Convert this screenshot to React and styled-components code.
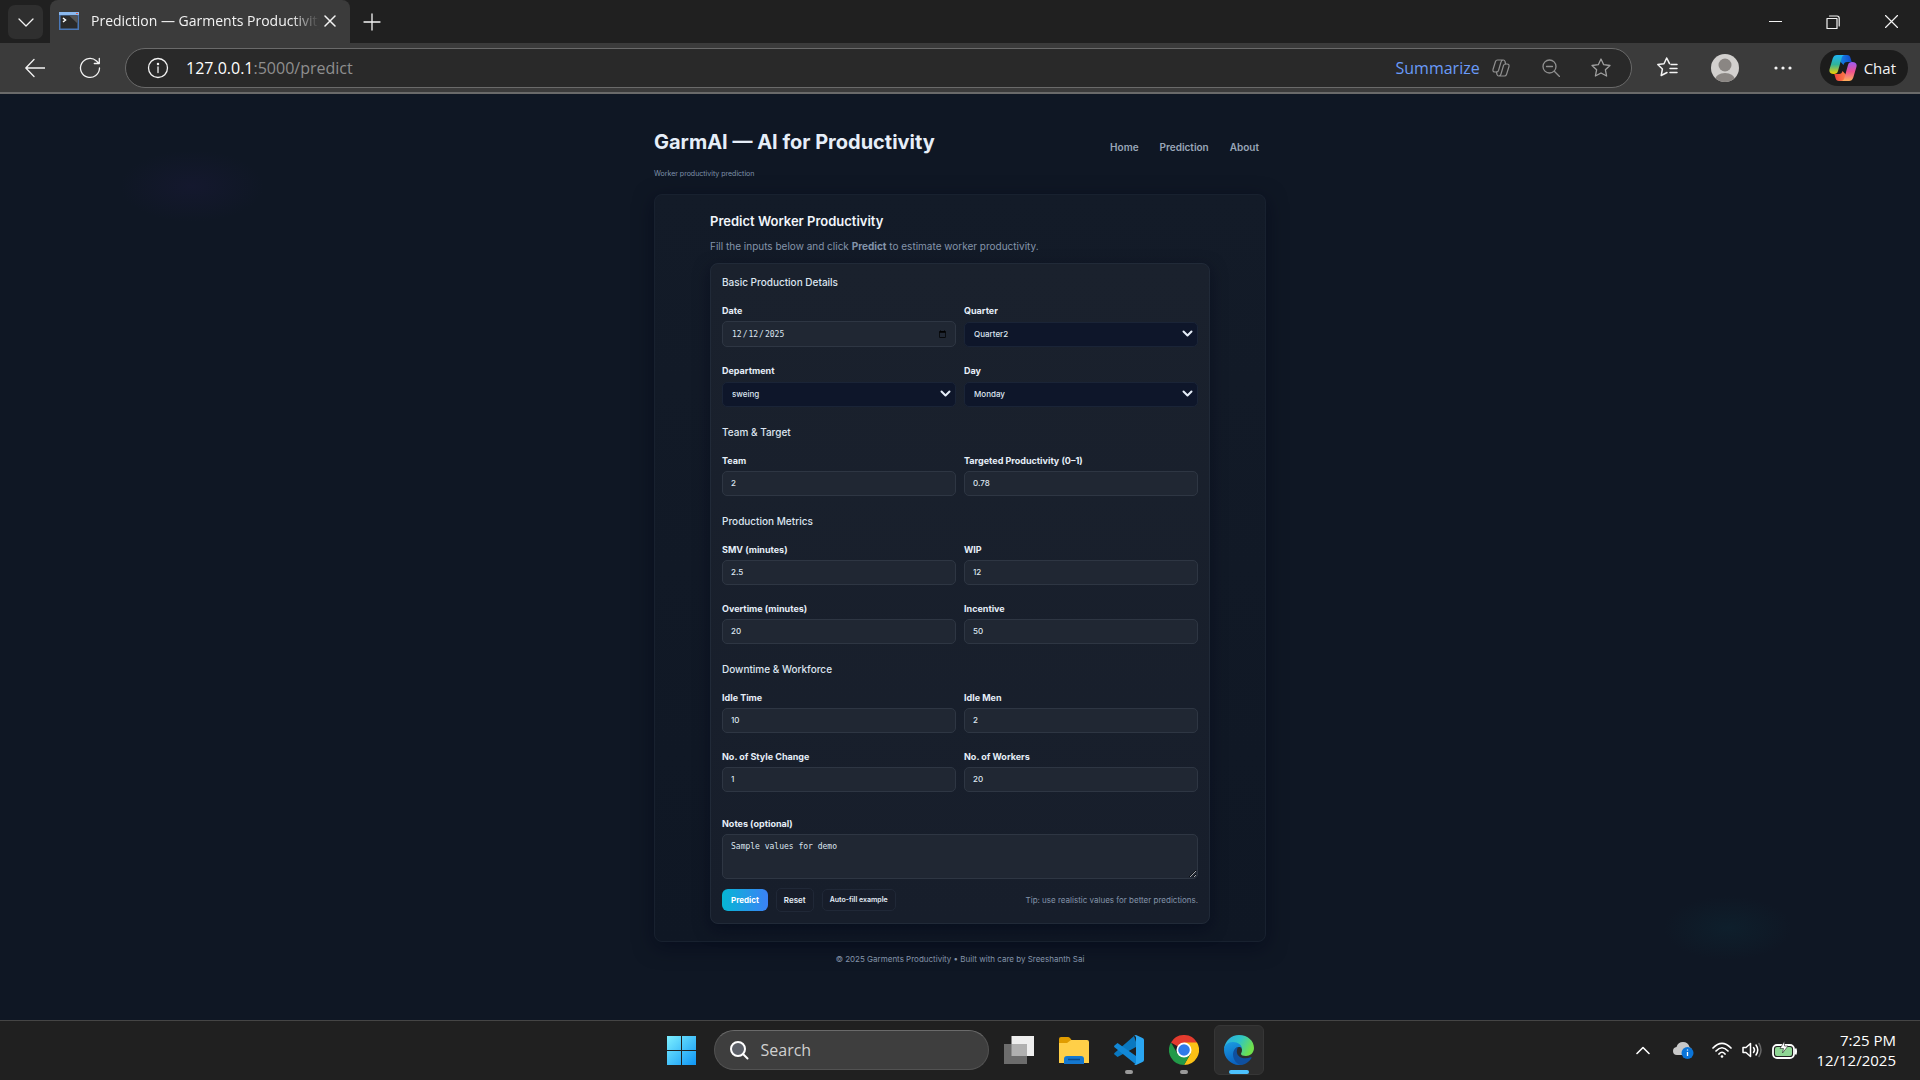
import styled, { createGlobalStyle } from "styled-components";

const ui = `"Open Sans", "Noto Sans", sans-serif`;
const mono = `"DejaVu Sans Mono", monospace`;

const GlobalStyle = createGlobalStyle`
   * {
      box-sizing: border-box;
   }
   body {
      margin: 0;
      background: #0f1724;
      font-family: Inter, sans-serif;
   }
   button, input, select, textarea {
      font-family: inherit;
      margin: 0;
   }
`

const Screen = styled.div`
   display: flex;
   flex-direction: column;
   min-height: 100vh;
`

/* browser */

const TabStrip = styled.div`
   display: flex;
   align-items: center;
   height: 43px;
   padding-left: 8px;
   background: #202020;
   color: #f3f3f3;
   font-family: ${ui};
`

const IconButton = styled.button`
   display: flex;
   align-items: center;
   justify-content: center;
   flex: none;
   width: ${(p) => p.$w || 36}px;
   height: ${(p) => p.$h || 34}px;
   padding: 0;
   border: none;
   border-radius: 7px;
   background: ${(p) => p.$bg || "transparent"};
   color: ${(p) => p.$color || "#f3f3f3"};
`

const Tab = styled.div`
   display: flex;
   align-items: center;
   width: 300px;
   height: 43px;
   margin-left: 7px;
   padding: 0 9px 2px;
   border-radius: 8px 8px 0 0;
   background: #3b3b3b;
`

const TabTitle = styled.span`
   flex: 1;
   margin-left: 12px;
   overflow: hidden;
   white-space: nowrap;
   font-size: 14px;
   line-height: 20px;
   mask-image: linear-gradient(90deg, #000 88%, transparent);
`

const Spacer = styled.div`
   flex: 1;
`

const Toolbar = styled.div`
   display: flex;
   align-items: center;
   height: 51px;
   padding: 0 12px 0 15px;
   background: #3b3b3b;
   border-bottom: 2px solid #6a6a6a;
   color: #f3f3f3;
   font-family: ${ui};
`

const AddressBar = styled.div`
   display: flex;
   flex: 1;
   align-items: center;
   height: 40px;
   padding: 0 5px 0 14px;
   border: 1px solid #6a6a6a;
   border-radius: 20px;
   background: #292929;
`

const Url = styled.span`
   flex: 1;
   margin-left: 10px;
   color: #8f8f8f;
   font-size: 16px;
   line-height: 24px;
   b {
      color: #ffffff;
      font-weight: 400;
   }
`

const Summarize = styled.button`
   display: flex;
   align-items: center;
   gap: 12px;
   padding: 0;
   margin-right: 16px;
   border: none;
   background: none;
   color: #6a9bf8;
   font-size: 16px;
`

const ChatButton = styled.button`
   display: flex;
   align-items: center;
   gap: 7px;
   height: 36px;
   padding: 0 12px 0 9px;
   border: none;
   border-radius: 18px;
   background: #1c1c1c;
   color: #f3f3f3;
   font-size: 15px;
`

/* page */

const Page = styled.main`
   display: flex;
   flex: 1;
   flex-direction: column;
   align-items: center;
   padding-top: 32px;
   background:
      radial-gradient(ellipse 72px 36px at 192px 92px, #14182e, rgba(20, 24, 46, 0)),
      radial-gradient(ellipse 64px 32px at calc(100% - 192px) calc(100% - 92px), #0e1f2c, rgba(14, 31, 44, 0)),
      #0f1724;
`

const Container = styled.div`
   width: 100%;
   max-width: 612px;
`

const PageHeader = styled.header`
   display: flex;
   align-items: center;
   justify-content: space-between;
   height: 42px;
`

const Brand = styled.h1`
   margin: 0 0 11px;
   color: #e6eef8;
   font-size: 20px;
   font-weight: 700;
   line-height: 30px;
`

const Nav = styled.nav`
   display: flex;
   gap: 21px;
   padding-right: 7px;
   a {
      color: #9aa6b8;
      font-size: 10px;
      font-weight: 600;
      line-height: 16px;
      text-decoration: none;
   }
`

const Tagline = styled.p`
   margin: 0 0 14px;
   color: #7f92ab;
   font-size: 7px;
   line-height: 12px;
`

const Card = styled.section`
   padding: 17px 55px;
   border: 1px solid #18212f;
   border-radius: 8px;
   background: linear-gradient(180deg, #131b28, #0f1724);
   box-shadow: 0 5px 20px rgba(2, 6, 23, 0.5);
`

const Title = styled.h2`
   margin: 0;
   color: #f1f5fb;
   font-size: 13px;
   font-weight: 600;
   line-height: 18px;
`

const Intro = styled.p`
   margin: 8px 0 9px;
   color: #8494aa;
   font-size: 10px;
   line-height: 16px;
`

const Form = styled.form`
   padding: 11px;
   border: 1px solid #212a38;
   border-radius: 8px;
   background: linear-gradient(180deg, #1a212d, #171e2b);
   box-shadow: 0 5px 16px rgba(2, 6, 23, 0.5);
`

const Group = styled.fieldset`
   min-width: 0;
   margin: 0 0 18px;
   padding: 0;
   border: none;
   &:last-of-type {
      margin-bottom: 25px;
   }
`

const Legend = styled.legend`
   padding: 0;
   margin-bottom: 15px;
   color: #dde5f0;
   font-size: 10px;
   font-weight: 500;
   line-height: 14px;
`

const Grid = styled.div`
   display: grid;
   grid-template-columns: 1fr 1fr;
   gap: 17px 8px;
`

const FieldBox = styled.div`
   display: flex;
   flex-direction: column;
   gap: 3px;
   label {
      color: #e6eef8;
      font-size: 9px;
      font-weight: 700;
      line-height: 14px;
   }
`

const Control = styled.input`
   width: 100%;
   height: ${(p) => (p.type === "date" ? 26 : 25)}px;
   padding: 0 8px;
   border: 1px solid #2e3643;
   border-radius: 5px;
   outline: none;
   background: #202733;
   color: #dde5f0;
   font-family: ${(p) => (p.type === "date" ? mono : "inherit")};
   font-size: 8px;
   font-weight: 500;
   &::-webkit-calendar-picker-indicator {
      width: 9px;
      height: 9px;
      padding: 0;
   }
`

const SelectWrap = styled.div`
   position: relative;
   color: #e6eef8;
   svg {
      position: absolute;
      top: 7px;
      right: 5px;
      pointer-events: none;
   }
`

const Select = styled.select`
   width: 100%;
   height: 25px;
   padding: 0 9px;
   border: 1px solid #1a2437;
   border-radius: 5px;
   appearance: none;
   background: #0e162a;
   color: #dde5f0;
   font-size: 8px;
   font-weight: 500;
`

const Notes = styled.textarea`
   display: block;
   width: 100%;
   height: 45px;
   padding: 7px 8px;
   border: 1px solid #2e3643;
   border-radius: 5px;
   outline: none;
   background: #202733;
   color: #dde5f0;
   font-family: ${mono} !important;
   font-size: 8px;
   line-height: 10px;
`

const Actions = styled.div`
   display: flex;
   align-items: center;
   gap: 8px;
   margin-top: 9px;
`

const Button = styled.button`
   height: ${(p) => p.$h || 22}px;
   padding: 0 ${(p) => p.$pad || 7}px;
   border: 1px solid #202837;
   border-radius: 5px;
   background: #171d2a;
   color: #e6eef8;
   font-size: ${(p) => p.$size || 8}px;
   font-weight: 600;
`

const PrimaryButton = styled(Button)`
   border: none;
   border-radius: 6px;
   background: linear-gradient(90deg, #06b6d4, #3b82f6);
   color: #ffffff;
   font-weight: 700;
`

const Tip = styled.span`
   margin-left: auto;
   color: #8494aa;
   font-size: 8px;
   line-height: 12px;
`

const Footer = styled.footer`
   padding: 11px 0;
   color: #8494aa;
   font-size: 8px;
   line-height: 12px;
   text-align: center;
`

/* taskbar */

const Taskbar = styled.footer`
   display: grid;
   grid-template-columns: 1fr auto 1fr;
   align-items: center;
   height: 60px;
   padding-bottom: 1px;
   border-top: 1px solid #454545;
   background: #202020;
   color: #ffffff;
   font-family: ${ui};
`

const Apps = styled.div`
   display: flex;
   grid-column: 2;
   align-items: center;
   gap: 5px;
`

const AppButton = styled.button`
   position: relative;
   display: flex;
   align-items: center;
   justify-content: center;
   width: 50px;
   height: 50px;
   padding: 0;
   border: 1px solid ${(p) => (p.$active ? "#363636" : "transparent")};
   border-radius: 6px;
   background: ${(p) => (p.$active ? "#2d2d2d" : "transparent")};
   &::after {
      content: "";
      display: ${(p) => (p.$open || p.$active ? "block" : "none")};
      position: absolute;
      bottom: 0;
      width: ${(p) => (p.$active ? 20 : 8)}px;
      height: 4px;
      border-radius: 2px;
      background: ${(p) => (p.$active ? "#4cc2ff" : "#9a9a9a")};
   }
`

const SearchBox = styled.label`
   display: flex;
   align-items: center;
   gap: 12px;
   width: 275px;
   height: 40px;
   margin-left: 2px;
   padding-left: 14px;
   border: 1px solid #525252;
   border-top-color: #6a6a6a;
   border-radius: 20px;
   background: #3e3e3e;
   input {
      width: 200px;
      padding: 0;
      border: none;
      outline: none;
      background: transparent;
      font-size: 16px;
   }
   input::placeholder {
      color: #d0d0d0;
      opacity: 1;
   }
`

const Tray = styled.div`
   display: flex;
   align-items: center;
   justify-content: flex-end;
   padding-right: 24px;
`

const TrayIcons = styled.div`
   display: flex;
   align-items: center;
   gap: 10px;
   margin-right: 19px;
   svg:first-child {
      margin-right: 13px;
   }
   svg:nth-child(2) {
      margin-right: 8px;
   }
`

const Clock = styled.time`
   font-size: 15px;
   line-height: 20px;
   text-align: right;
   span {
      display: block;
   }
`

function Icon({ size = 20, box, width = 1.3, children }) {
   return (
      <svg width={size} height={size} viewBox={`0 0 ${box || size} ${box || size}`} fill="none" stroke="currentColor" strokeWidth={width} strokeLinecap="round" strokeLinejoin="round" aria-hidden="true">
         {children}
      </svg>
   );
}

function CopilotLogo() {
   return (
      <svg width="28" height="28" viewBox="0 0 28 28" aria-hidden="true">
         <defs>
            <linearGradient id="cpA" x1="0" y1="0" x2="0" y2="1">
               <stop offset="0" stopColor="#1fb4f5" />
               <stop offset="0.5" stopColor="#2fb49a" />
               <stop offset="1" stopColor="#f6d000" />
            </linearGradient>
            <linearGradient id="cpB" x1="0" y1="0" x2="0" y2="1">
               <stop offset="0" stopColor="#9b5cf6" />
               <stop offset="0.5" stopColor="#ee5091" />
               <stop offset="1" stopColor="#ffb05a" />
            </linearGradient>
            <linearGradient id="cpC" x1="0" y1="0" x2="1" y2="0">
               <stop offset="0" stopColor="#1795ee" />
               <stop offset="1" stopColor="#1246c8" />
            </linearGradient>
            <linearGradient id="cpD" x1="0" y1="0" x2="1" y2="0">
               <stop offset="0" stopColor="#f0403c" />
               <stop offset="1" stopColor="#ff8f4a" />
            </linearGradient>
         </defs>
         <path d="M8 1h10c2 0 3 1 3.500 3l1.200 4H18c-2 0-3 1-3.500 3L9 5z" fill="url(#cpC)" />
         <path d="M20 27H10c-2 0-3-1-3.500-3l-1.200-4H10c2 0 3-1 3.500-3l5.500 6z" fill="url(#cpD)" />
         <path d="M8 1h8c-2 0-3 1.500-3.500 3.500L9 17c-.6 2.200-2 3-4 3-4 0-5.200-2-4.400-5L3.700 4.500C4.500 2 6 1 8 1z" fill="url(#cpA)" />
         <path d="M20 27h-8c2 0 3-1.500 3.500-3.500L19 11c.6-2.200 2-3 4-3 4 0 5.200 2 4.400 5l-3.100 10.500C23.500 26 22 27 20 27z" fill="url(#cpB)" />
      </svg>
   );
}

function EdgeLogo() {
   return (
      <svg width="30" height="30" viewBox="0 0 30 30" aria-hidden="true">
         <defs>
            <linearGradient id="edA" x1="0" y1="0" x2="1" y2="0.400">
               <stop offset="0" stopColor="#2aa8e8" />
               <stop offset="0.55" stopColor="#2fc6c4" />
               <stop offset="1" stopColor="#6fe04c" />
            </linearGradient>
            <linearGradient id="edB" x1="0" y1="0" x2="0.300" y2="1">
               <stop offset="0" stopColor="#1b9de2" />
               <stop offset="1" stopColor="#0a62c0" />
            </linearGradient>
         </defs>
         <path d="M0 14C1 6 7 0 15 0c9 0 15 6 15 13 0 5-4 8-8 8-3 0-5-1-5-2 0-1 1-1.500 1-4 0-4-4-7-9-7-4 0-7 2-9 6z" fill="url(#edA)" />
         <path d="M0 15c0-5 4-8 9-8 5 0 9 3 9 7-1-2-2-2-3-2-3 0-5 3-5 6 0 6 5 10 10 10-1 1-3 2-5 2C7 30 0 23 0 15z" fill="url(#edB)" />
         <path d="M14 12c-3 1-5 4-5 7 0 6 4 11 9 11 4-1 8-4 9.500-7 .4-.8-.3-1-1-.700-6 2.500-12.500.200-13.500-4.300-.5-2 .2-4 1-6z" fill="#0f4f9e" />
      </svg>
   );
}

function Field({ label, type = "text", value }) {
   const id = label.replace(/\W+/g, "-").toLowerCase();
   return (
      <FieldBox>
         <label htmlFor={id}>{label}</label>
         <Control id={id} type={type} defaultValue={value} />
      </FieldBox>
   );
}

function SelectField({ label, value }) {
   const id = label.toLowerCase();
   return (
      <FieldBox>
         <label htmlFor={id}>{label}</label>
         <SelectWrap>
            <Select id={id} defaultValue={value}>
               <option>{value}</option>
            </Select>
            <Icon size={11} width={2}><path d="M1.500 3.500 5.500 7.500 9.500 3.500" /></Icon>
         </SelectWrap>
      </FieldBox>
   );
}

function Browser() {
   return (
      <header>
         <TabStrip>
            <IconButton $w={35} $bg="#2f2f2f" aria-label="Tab actions">
               <Icon size={18}><path d="M2 6l7 7 7-7" /></Icon>
            </IconButton>
            <Tab>
               <svg width="20" height="18" viewBox="0 0 20 18" aria-hidden="true">
                  <path d="M0 0h20v18H0z" fill="#4a78b8" />
                  <path d="M0 0h20v3H0z" fill="#8ab8ee" />
                  <path d="M17 1h2v1h-2z" fill="#e05a4a" />
                  <path d="M1.500 3.500h17v13h-17z" fill="#2a2a2a" />
                  <path d="M10 3.500h8.500v8z" fill="#555" />
                  <path d="M4 6l2.500 2L4 10" stroke="#fff" strokeWidth="1.500" fill="none" />
               </svg>
               <TabTitle>Prediction — Garments Productivity</TabTitle>
               <IconButton $w={22} $h={22} aria-label="Close tab">
                  <Icon size={12} width={1.5}><path d="M1 1l10 10M11 1L1 11" /></Icon>
               </IconButton>
            </Tab>
            <IconButton $w={44} aria-label="New tab">
               <Icon size={18}><path d="M9 1v16M1 9h16" /></Icon>
            </IconButton>
            <Spacer />
            <IconButton $w={58} aria-label="Minimize">
               <Icon size={13} width={1}><path d="M0 6.500h13" /></Icon>
            </IconButton>
            <IconButton $w={58} aria-label="Restore">
               <Icon size={14} width={1.2}>
                  <path d="M1 3.500h10v10H1zM3.500 1h7.500q2.200 0 2.200 2.200V11" />
               </Icon>
            </IconButton>
            <IconButton $w={58} aria-label="Close">
               <Icon size={13} width={1.2}><path d="M.5.500l12 12M12.500.500l-12 12" /></Icon>
            </IconButton>
         </TabStrip>
         <Toolbar>
            <IconButton $w={40} aria-label="Back">
               <Icon size={20}><path d="M20 10H1M9 1.500L.8 10 9 18.500" /></Icon>
            </IconButton>
            <IconButton $w={70} $h={40} aria-label="Refresh">
               <Icon size={22}><path d="M20.500 11a9.500 9.500 0 1 1-3-7l2.500 2.500M20.300 1.500v5h-5" /></Icon>
            </IconButton>
            <AddressBar>
               <Icon size={36} width={1.3}>
                  <circle cx="18" cy="18" r="9.500" />
                  <path d="M18 17v5.500" />
                  <circle cx="18" cy="14" r=".6" fill="currentColor" />
               </Icon>
               <Url><b>127.0.0.1</b>:5000/predict</Url>
               <Summarize>
                  Summarize
                  <Icon size={18} width={1.2}>
                     <g stroke="#8f8f8f">
                        <path d="M5.500 1h5.800q1.400 0 1.700 1.500l.6 2.500M5.500 1Q4 1 3.500 2.500L1 10.500Q.5 13 3 13h1.500q1.500 0 2-1.500L9 3q.5-2 2.300-2" />
                        <path d="M12.500 17H6.700q-1.400 0-1.700-1.500L4.400 13M12.500 17q1.500 0 2-1.500L17 7.500Q17.500 5 15 5h-1.500q-1.500 0-2 1.500L9 15q-.5 2-2.300 2" />
                     </g>
                  </Icon>
               </Summarize>
               <IconButton $w={50} $color="#8f8f8f" aria-label="Zoom out">
                  <Icon size={18}><circle cx="7.500" cy="7.500" r="6.500" /><path d="M4.500 7.500h6M12.300 12.300L17.500 17.500" /></Icon>
               </IconButton>
               <IconButton $w={50} $color="#a0a0a0" aria-label="Favorite">
                  <Icon size={20}><path d="M10 1l2.700 5.700 6.300.8-4.600 4.300 1.200 6.200L10 15l-5.600 3 1.200-6.200L1 7.500l6.300-.8z" /></Icon>
               </IconButton>
            </AddressBar>
            <IconButton $w={72} aria-label="Favorites">
               <Icon size={21} width={1.5}><path d="M12.500 6.700h0L9.700 1 7 6.700l-6.200.8L5.400 12 4.200 18.500 10 15.500M14 7.500h6M13 11.500h7M13 15.500h7" /></Icon>
            </IconButton>
            <IconButton $w={42} aria-label="Profile">
               <svg width="28" height="28" viewBox="0 0 28 28">
                  <clipPath id="face"><circle cx="14" cy="14" r="14" /></clipPath>
                  <g clipPath="url(#face)">
                     <path d="M0 0h28v28H0z" fill="#d2d0ce" />
                     <circle cx="14" cy="11" r="6.500" fill="#8a8683" />
                     <ellipse cx="14" cy="26" rx="10" ry="7" fill="#8a8683" />
                  </g>
               </svg>
            </IconButton>
            <IconButton $w={74} aria-label="Settings and more">
               <svg width="18" height="4" viewBox="0 0 18 4" fill="currentColor">
                  <circle cx="2" cy="2" r="1.600" /><circle cx="9" cy="2" r="1.600" /><circle cx="16" cy="2" r="1.600" />
               </svg>
            </IconButton>
            <ChatButton><CopilotLogo />Chat</ChatButton>
         </Toolbar>
      </header>
   );
}

function Predict() {
   return (
      <Page>
         <Container>
            <PageHeader>
               <Brand>GarmAI — AI for Productivity</Brand>
               <Nav>
                  <a href="#home">Home</a>
                  <a href="#predict">Prediction</a>
                  <a href="#about">About</a>
               </Nav>
            </PageHeader>
            <Tagline>Worker productivity prediction</Tagline>
            <Card>
               <Title>Predict Worker Productivity</Title>
               <Intro>Fill the inputs below and click <b>Predict</b> to estimate worker productivity.</Intro>
               <Form onSubmit={(e) => e.preventDefault()}>
                  <Group>
                     <Legend>Basic Production Details</Legend>
                     <Grid>
                        <Field label="Date" type="date" value="2025-12-12" />
                        <SelectField label="Quarter" value="Quarter2" />
                        <SelectField label="Department" value="sweing" />
                        <SelectField label="Day" value="Monday" />
                     </Grid>
                  </Group>
                  <Group>
                     <Legend>Team &amp; Target</Legend>
                     <Grid>
                        <Field label="Team" value="2" />
                        <Field label="Targeted Productivity (0–1)" value="0.78" />
                     </Grid>
                  </Group>
                  <Group>
                     <Legend>Production Metrics</Legend>
                     <Grid>
                        <Field label="SMV (minutes)" value="2.5" />
                        <Field label="WIP" value="12" />
                        <Field label="Overtime (minutes)" value="20" />
                        <Field label="Incentive" value="50" />
                     </Grid>
                  </Group>
                  <Group>
                     <Legend>Downtime &amp; Workforce</Legend>
                     <Grid>
                        <Field label="Idle Time" value="10" />
                        <Field label="Idle Men" value="2" />
                        <Field label="No. of Style Change" value="1" />
                        <Field label="No. of Workers" value="20" />
                     </Grid>
                  </Group>
                  <FieldBox>
                     <label htmlFor="notes">Notes (optional)</label>
                     <Notes id="notes" defaultValue="Sample values for demo" />
                  </FieldBox>
                  <Actions>
                     <PrimaryButton type="submit" $pad={9}>Predict</PrimaryButton>
                     <Button type="reset" $h={24}>Reset</Button>
                     <Button type="button" $size={7}>Auto-fill example</Button>
                     <Tip>Tip: use realistic values for better predictions.</Tip>
                  </Actions>
               </Form>
            </Card>
            <Footer>© 2025 Garments Productivity • Built with care by Sreeshanth Sai</Footer>
         </Container>
      </Page>
   );
}

function WindowsTaskbar() {
   return (
      <Taskbar>
         <Apps>
            <AppButton aria-label="Start">
               <svg width="29" height="29" viewBox="0 0 29 29">
                  <defs>
                     <linearGradient id="win" gradientUnits="userSpaceOnUse" x1="0" y1="0" x2="29" y2="29">
                        <stop offset="0" stopColor="#7df0ff" />
                        <stop offset="1" stopColor="#0e95f5" />
                     </linearGradient>
                  </defs>
                  <path d="M0 0h14v14H0zM15 0h14v14H15zM0 15h14v14H0zM15 15h14v14H15z" fill="url(#win)" />
               </svg>
            </AppButton>
            <SearchBox>
               <Icon size={20} width={2}><circle cx="9" cy="9" r="7" fill="#5c6068" /><path d="M14 14l4.500 4.500" /></Icon>
               <input type="text" placeholder="Search" aria-label="Search" />
            </SearchBox>
            <AppButton aria-label="Task view">
               <svg width="30" height="28" viewBox="0 0 30 28">
                  <path d="M7.500 0H30v20H7.500z" fill="#eeeeee" />
                  <path d="M0 8h23v20H0z" fill="#6c6c6c" />
                  <path d="M7.500 8H23v12H7.500z" fill="#b0b0b0" />
               </svg>
            </AppButton>
            <AppButton aria-label="File Explorer">
               <svg width="30" height="28" viewBox="0 0 30 28">
                  <path d="M0 3q0-2 2-2h7q1 0 2 1l1.500 2L9 8H0z" fill="#e09c00" />
                  <path d="M0 7h8l4-3h16q2 0 2 2v21H0z" fill="#ffcf48" />
                  <path d="M5 28v-5q0-3 3-3h14q3 0 3 3v5z" fill="#1478d0" />
                  <path d="M9 23.500h12" stroke="#0a4a8a" strokeWidth="1.500" />
               </svg>
            </AppButton>
            <AppButton $open aria-label="Visual Studio Code">
               <svg width="30" height="30" viewBox="0 0 30 30">
                  <path d="M22 7v5L3.500 22 .5 19.500q-.8-.8 0-1.600L20 1z" fill="#0a78c0" />
                  <path d="M.5 10.500L3.500 8 22 21l1 8q-1 .5-2-.3L.5 12.200q-.8-.8 0-1.700z" fill="#1288d6" />
                  <path d="M22 0l6.500 3Q30 3.600 30 5v20q0 1.400-1.500 2L22 30q-1.200 0-1.800-1 1.800.5 1.800-1.500v-25Q22 .500 20.200 1 21 0 22 0z" fill="#2aa6f2" />
               </svg>
            </AppButton>
            <AppButton $open aria-label="Chrome">
               <svg width="30" height="30" viewBox="0 0 30 30">
                  <path d="M15 15L2 7.500A15 15 0 0 1 28 7.500z" fill="#e33b2e" />
                  <path d="M15 7.500h13A15 15 0 0 1 15 30l6.500-11.200z" fill="#fbc116" />
                  <path d="M8.500 18.800L2 7.500A15 15 0 0 0 15 30l6.500-11.200z" fill="#229a48" />
                  <circle cx="15" cy="15" r="7.500" fill="#fff" />
                  <circle cx="15" cy="15" r="5.800" fill="#2f7bea" />
               </svg>
            </AppButton>
            <AppButton $active aria-label="Edge"><EdgeLogo /></AppButton>
         </Apps>
         <Tray>
            <TrayIcons>
               <Icon size={14} width={1.6}><path d="M1 10.500l6-6 6 6" /></Icon>
               <svg width="21" height="18" viewBox="0 0 21 18" aria-hidden="true">
                  <path d="M4 14q-4 0-4-4 0-3.500 3.500-4Q5 1 10 1q5 0 6.500 5 2.500 1 2.500 4 0 4-4 4z" fill="#c8c8c8" />
                  <circle cx="14.500" cy="12" r="6" fill="#0a74d8" />
                  <path d="M14.500 11v4M14.500 8.500v1" stroke="#fff" strokeWidth="1.300" />
               </svg>
               <Icon size={20} width={1.7}>
                  <path d="M1 8q9-9 18 0M4 11q6-6.500 12 0M7 14q3-3.500 6 0" />
                  <circle cx="10" cy="16.500" r="1.300" fill="currentColor" stroke="none" />
               </Icon>
               <Icon size={20} width={1.5}>
                  <path d="M1 7.500h3L8.500 3.500v13L4 12.500H1zM11.500 7.500q2 2.500 0 5M14 5q3.500 5 0 10" />
                  <path d="M17 3.500q4 6.500 0 13" stroke="#666" />
               </Icon>
               <svg width="25" height="18" viewBox="0 0 25 18" aria-hidden="true">
                  <rect x="1" y="4" width="21" height="13" rx="4" fill="none" stroke="#fff" strokeWidth="1.800" />
                  <path d="M23.500 7.500q1 3 0 6" stroke="#fff" strokeWidth="2" fill="none" />
                  <rect x="3" y="6" width="17" height="9" rx="2" fill="#8fd694" />
                  <path d="M12.500 0L8 7.500h3.500L10.500 12 16 5h-3.500z" fill="#fff" stroke="#202020" strokeWidth=".6" />
               </svg>
            </TrayIcons>
            <Clock><span>7:25 PM</span><span>12/12/2025</span></Clock>
         </Tray>
      </Taskbar>
   );
}

export default function App() {
   return (
      <Screen>
         <GlobalStyle />
         <Browser />
         <Predict />
         <WindowsTaskbar />
      </Screen>
   );
}
